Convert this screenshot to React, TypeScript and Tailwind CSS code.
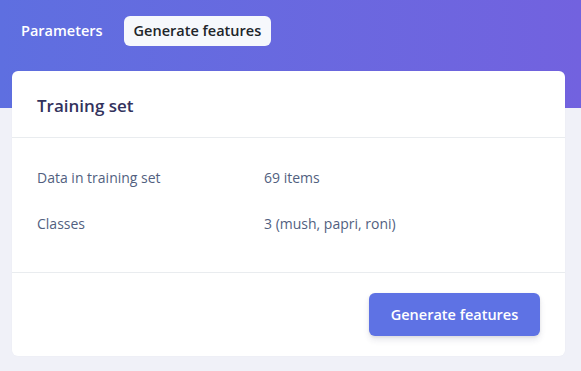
const rows = [
  { label: "Data in training set", value: "69 items" },
  { label: "Classes", value: "3 (mush, papri, roni)" },
];

export default function App() {
  return (
    <div className="min-h-[371px] w-full bg-[#f0f1f8] font-['Open_Sans',sans-serif]">
      <div className="h-[108px] bg-gradient-to-r from-[#5e6fe0] to-[#7262df] px-[11px] pt-[16px]">
        <div className="flex gap-[11px]">
          <button className="h-[30px] rounded-md px-[10px] text-[14.5px] font-semibold text-white">
            Parameters
          </button>
          <button className="h-[30px] rounded-md bg-[#f6f8fc] px-[10px] text-[14.5px] font-semibold text-[#212529]">
            Generate features
          </button>
        </div>
      </div>
      <div className="-mt-[37px] ml-[12px] mr-[16px] rounded-md bg-white shadow-[0_0_2px_rgba(0,0,0,0.03)]">
        <div className="flex h-[67px] items-center border-b border-[#e9ecef] px-[25px] pt-[4px]">
          <h3 className="text-[17px] font-semibold text-[#32325d]">Training set</h3>
        </div>
        <div className="flex h-[135px] flex-col gap-[26px] border-b border-[#e9ecef] px-[25px] pt-[29px] text-[14px] text-[#525f7f]">
          {rows.map((r) => (
            <div key={r.label} className="flex h-[20px] items-center">
              <span className="w-[227px]">{r.label}</span>
              <span>{r.value}</span>
            </div>
          ))}
        </div>
        <div className="flex justify-end px-[25px] pb-[20px] pt-[20px]">
          <button className="h-[43px] w-[171px] rounded-md bg-[#5e72e4] text-[14.5px] font-semibold text-white shadow-[0_4px_6px_rgba(50,50,93,0.11),0_1px_3px_rgba(0,0,0,0.08)]">
            Generate features
          </button>
        </div>
      </div>
    </div>
  );
}
